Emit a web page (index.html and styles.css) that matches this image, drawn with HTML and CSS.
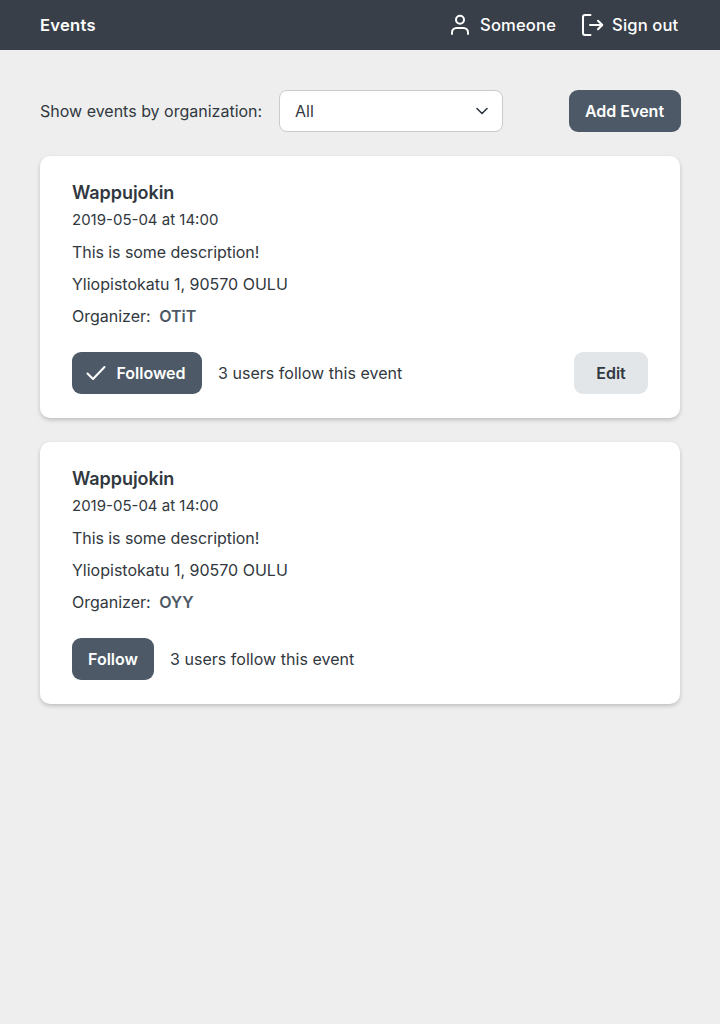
FILE: index.html
```html
<!DOCTYPE html>
<html lang="en">
<head>
<meta charset="utf-8">
<title>Events</title>
<link rel="stylesheet" href="styles.css">
</head>
<body>
<header class="navbar">
  <a class="brand">Events</a>
  <nav class="nav-links">
    <a class="nav-link user-link">
      <svg class="nav-icon" viewBox="0 0 24 24"><circle cx="12" cy="6.700" r="4"/><path d="M4 21v-1.500a4.500 4.500 0 0 1 4.500-4.500h7a4.500 4.500 0 0 1 4.500 4.500v1.500"/></svg>
      <span>Someone</span>
    </a>
    <a class="nav-link">
      <svg class="nav-icon" viewBox="0 0 24 24"><path d="M10.500 2H5a2 2 0 0 0-2 2v16a2 2 0 0 0 2 2h5.500M10 12h12M18 7.700l4.300 4.300-4.300 4.300"/></svg>
      <span>Sign out</span>
    </a>
  </nav>
</header>
<main class="content">
  <div class="toolbar">
    <span class="filter-label">Show events by organization:</span>
    <div class="select">
      <span>All</span>
      <svg class="chevron" viewBox="0 0 12 8"><path d="M1 1.500l5 5 5-5"/></svg>
    </div>
    <button class="button add">Add Event</button>
  </div>
  <article class="card">
    <h2 class="title">Wappujokin</h2>
    <p class="date">2019-05-04 at 14:00</p>
    <p class="line description">This is some description!</p>
    <p class="line">Yliopistokatu 1, 90570 OULU</p>
    <p class="line">Organizer: <a class="organizer">OTiT</a></p>
    <div class="actions">
      <button class="button followed">
        <svg class="check" viewBox="0 0 20 16"><path d="M1.500 8.500l5.500 5.500L18.500 2"/></svg>
        <span>Followed</span>
      </button>
      <span class="followers">3 users follow this event</span>
      <button class="button edit">Edit</button>
    </div>
  </article>
  <article class="card">
    <h2 class="title">Wappujokin</h2>
    <p class="date">2019-05-04 at 14:00</p>
    <p class="line description">This is some description!</p>
    <p class="line">Yliopistokatu 1, 90570 OULU</p>
    <p class="line">Organizer: <a class="organizer">OYY</a></p>
    <div class="actions">
      <button class="button follow">Follow</button>
      <span class="followers">3 users follow this event</span>
    </div>
  </article>
</main>
</body>
</html>
```
FILE: styles.css
```css
* { box-sizing: border-box; }
body {
  margin: 0;
  min-height: 100vh;
  background: #eeeeee;
  color: #313840;
  font: 16px/24px Inter, sans-serif;
}
svg { fill: none; stroke: currentColor; stroke-linecap: round; stroke-linejoin: round; flex: none; }
h2, p { margin: 0; }
.navbar {
  height: 50px;
  padding: 0 41.6px 0 40px;
  display: flex;
  align-items: center;
  justify-content: space-between;
  background: #393f49;
  color: #fff;
  font-size: 16.6px;
  letter-spacing: .14px;
}
.brand { font-weight: 600; letter-spacing: .25px; }
.nav-links { display: flex; gap: 24px; }
.nav-link { display: flex; align-items: center; gap: 8px; font-weight: 500; }
.nav-icon { width: 24px; height: 24px; stroke-width: 2; }
.content { padding: 40px; }
.toolbar { display: flex; align-items: center; margin-bottom: 24px; }
.filter-label { width: 239px; white-space: nowrap; }
.select {
  width: 224px;
  height: 42px;
  padding: 0 14px 0 15px;
  display: flex;
  align-items: center;
  justify-content: space-between;
  background: #fff;
  border: 1px solid #cacbcd;
  border-radius: 8px;
}
.chevron { width: 12px; height: 8px; stroke-width: 1.6; }
.button {
  height: 42px;
  padding: 0;
  display: flex;
  align-items: center;
  justify-content: center;
  border: 0;
  border-radius: 9px;
  background: #4d5966;
  color: #fff;
  font: 600 16px/24px Inter, sans-serif;
}
.add { width: 112px; margin-left: auto; margin-right: -.5px; }
.card {
  height: 262px;
  padding: 24px 32px;
  margin-bottom: 24px;
  background: #fff;
  border-radius: 10px;
  box-shadow: 0 2px 4px rgba(0, 0, 0, .2);
}
.title { font-size: 18px; line-height: 26px; font-weight: 600; letter-spacing: -.05px; }
.date { font-size: 15px; line-height: 28px; margin-bottom: 6px; }
.line { line-height: 24px; margin-bottom: 8px; }
.description { letter-spacing: -.06px; }
.organizer { margin-left: 4px; font-weight: 600; color: #4d5966; }
.actions { display: flex; align-items: center; margin-top: 24px; }
.followed { width: 130px; gap: 10px; padding-right: 2px; }
.follow { width: 82px; }
.check { width: 20px; height: 16px; stroke-width: 2; }
.followers { margin-left: 16px; letter-spacing: .03px; }
.edit { width: 74px; margin-left: auto; background: #e2e6e9; color: #313840; }
```
